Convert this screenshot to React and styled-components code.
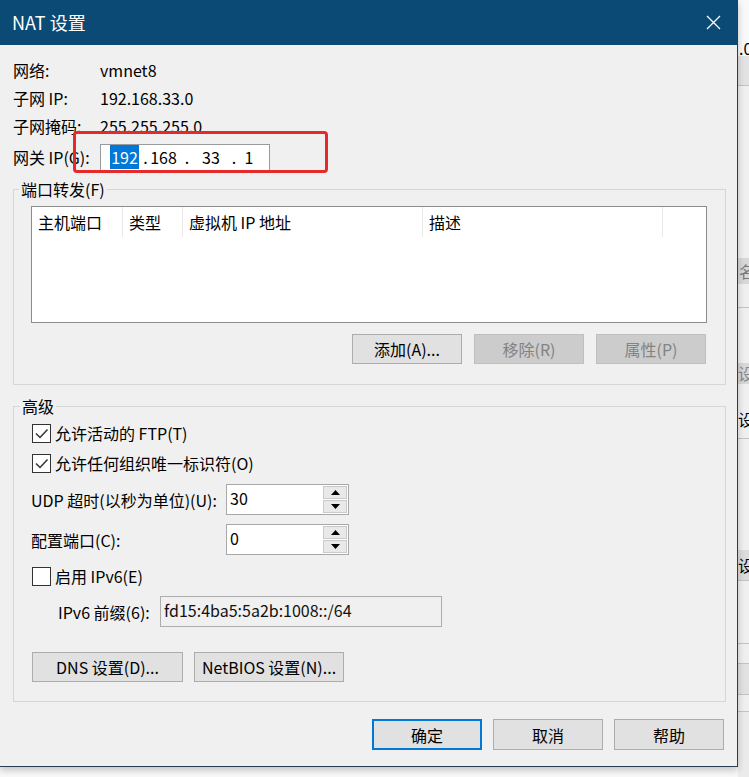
import React from 'react';
import styled, { createGlobalStyle } from 'styled-components'

const GlobalStyle = createGlobalStyle`
    html, body {
        margin: 0;
        padding: 0;
        background: #f8f8f8;
    }
    body {
        font-family: "Noto Sans CJK SC", "Noto Sans", sans-serif;
        font-size: 16px;
        color: #000;
    }
`

const Screen = styled.div`
    width: 749px;
    height: 777px;
    overflow: hidden;
    display: flex;
    align-items: flex-start;
`

/* Dialog window */
const Dialog = styled.div`
    flex: none;
    width: 738px;
    height: 767px;
    box-sizing: border-box;
    background: #f0f0f0;
    border-right: 1px solid #2b3d52;
    border-bottom: 1px solid #2b3d52;
    box-shadow: 0 3px 7px rgba(0, 0, 0, 0.22);
    display: flex;
    flex-direction: column;
    position: relative;
    z-index: 1;
`

const TitleBar = styled.div`
    height: 45px;
    flex: none;
    background: #0b4a74;
    display: flex;
    align-items: center;
    justify-content: space-between;
    padding: 0 16px 0 12px;

    .title {
        color: #fff;
        font-size: 18px;
        line-height: 22px;
        margin-top: -1px;
    }
`

const Body = styled.div`
    flex: 1;
    padding: 11px 11px 0 13px;
    display: flex;
    flex-direction: column;
`

/* Top info block */
const InfoBlock = styled.div`
    position: relative;
`

const InfoRow = styled.div`
    display: grid;
    grid-template-columns: 87px 1fr;
    align-items: center;
    height: ${p => p.$h || 28}px;
    line-height: 20px;
`

const IpBox = styled.div`
    width: 170px;
    height: 27px;
    box-sizing: border-box;
    border: 1px solid #9a9a9a;
    background: #fff;
    display: flex;
    align-items: center;
    padding-left: 5px;
    line-height: 20px;
`

const IpPart = styled.span`
    width: ${p => p.$w}px;
    flex: none;
    text-align: center;

    .sel {
        background: #0078d7;
        color: #fff;
        padding: 0 1px;
    }
`

const RedMark = styled.div`
    position: absolute;
    left: 60px;
    top: 75px;
    width: 255px;
    height: 42px;
    box-sizing: border-box;
    border: 3px solid #e62a2a;
    border-radius: 4px;
    pointer-events: none;
`

/* Group frames */
const Group = styled.fieldset`
    margin: ${p => p.$top}px 0 0 0;
    padding: 0;
    min-width: 0;
    border: 1px solid #d6d6d6;

    legend {
        margin-left: ${p => p.$legend}px;
        padding: 0 2px;
        font-size: 16px;
        line-height: 18px;
    }

    .inner {
        padding: ${p => p.$pad};
    }
`

/* List view */
const ListBox = styled.div`
    height: 117px;
    box-sizing: border-box;
    border: 1px solid #8c8c8c;
    background: #fff;
`

const ListHeader = styled.div`
    display: flex;
    height: 30px;
`

const HeaderCell = styled.div`
    width: ${p => (p.$w ? `${p.$w}px` : 'auto')};
    flex: ${p => (p.$w ? 'none' : '1')};
    box-sizing: border-box;
    padding-left: 6px;
    line-height: 30px;
    border-right: ${p => (p.$w ? '1px solid #e8e8e8' : 'none')};
    white-space: nowrap;
`

const ButtonRow = styled.div`
    display: flex;
    justify-content: ${p => p.$align || 'flex-end'};
    gap: ${p => p.$gap || 12}px;
    margin-top: ${p => p.$top}px;
    padding-left: ${p => p.$left || 0}px;
    padding-right: ${p => p.$right || 0}px;
`

const Button = styled.button`
    width: ${p => p.$w || 110}px;
    height: ${p => p.$h || 30}px;
    box-sizing: border-box;
    margin: 0;
    padding: 0;
    font-family: inherit;
    font-size: 16px;
    line-height: 20px;
    color: ${p => (p.disabled ? '#838383' : '#000')};
    background: ${p => (p.disabled ? '#cccccc' : '#e1e1e1')};
    border: ${p => (p.$primary ? '2px solid #0078d7' : p.disabled ? '1px solid #bfbfbf' : '1px solid #adadad')};
`

/* Advanced options */
const CheckRow = styled.div`
    display: flex;
    align-items: center;
    gap: 4px;
    height: 30px;
    margin-top: ${p => p.$top || 0}px;
    padding-left: 1px;
    line-height: 20px;
`

const Box = styled.span`
    width: 19px;
    height: 19px;
    box-sizing: border-box;
    border: 1px solid #333;
    background: #fff;
    display: flex;
    align-items: center;
    justify-content: center;
`

const FieldRow = styled.div`
    display: grid;
    grid-template-columns: ${p => p.$label}px ${p => p.$field}px;
    align-items: center;
    height: 31px;
    margin-top: ${p => p.$top}px;
    padding-left: ${p => p.$left || 0}px;
    line-height: 20px;
    white-space: nowrap;
`

const SpinBox = styled.div`
    height: 31px;
    box-sizing: border-box;
    border: 1px solid #a8a8a8;
    background: #fff;
    display: flex;

    .value {
        flex: 1;
        padding: 3px 0 0 3px;
    }
`

const SpinButtons = styled.div`
    width: 24px;
    display: flex;
    flex-direction: column;
    gap: 1px;
    padding: 1px 1px 1px 0;
`

const SpinButton = styled.div`
    flex: 1;
    box-sizing: border-box;
    background: #e9e9e9;
    border: 1px solid #cacaca;
    display: flex;
    align-items: center;
    justify-content: center;
`

const TextField = styled.div`
    height: 31px;
    box-sizing: border-box;
    border: 1px solid #adadad;
    background: #f0f0f0;
    padding: 3px 0 0 3px;
    color: #111;
`

/* Window partly hidden behind the dialog */
const BackStrip = styled.div`
    flex: 1;
    height: 777px;
    display: flex;
    flex-direction: column;
    overflow: hidden;
    background: #f0f0f0;
`

const Band = styled.div`
    height: ${p => p.$h}px;
    flex: none;
    background: ${p => p.$bg || '#f0f0f0'};
    border-bottom: ${p => (p.$line ? '1px solid #c4c4c4' : 'none')};
    color: ${p => p.$color || '#000'};
    font-size: 16px;
    line-height: ${p => p.$h}px;
    white-space: nowrap;
    padding-left: ${p => p.$indent || 0}px;
`

function Close() {
    return (
        <svg width="15" height="15" viewBox="0 0 15 15">
            <path d="M1 1 L14 14 M14 1 L1 14" stroke="#fff" strokeWidth="1.3" fill="none" />
        </svg>
    )
}

function Check({ checked }) {
    return (
        <Box>
            {checked && (
                <svg width="15" height="15" viewBox="0 0 15 15">
                    <path d="M2 7.5 L6 11.5 L13.5 3.5" stroke="#333" strokeWidth="1.5" fill="none" />
                </svg>
            )}
        </Box>
    )
}

function Spin({ value }) {
    return (
        <SpinBox>
            <span className="value">{value}</span>
            <SpinButtons>
                <SpinButton>
                    <svg width="9" height="5" viewBox="0 0 9 5"><polygon points="0,5 4.5,0 9,5" fill="#000" /></svg>
                </SpinButton>
                <SpinButton>
                    <svg width="9" height="5" viewBox="0 0 9 5"><polygon points="0,0 9,0 4.5,5" fill="#000" /></svg>
                </SpinButton>
            </SpinButtons>
        </SpinBox>
    )
}

const columns = [
    { label: '主机端口', w: 91 },
    { label: '类型', w: 60 },
    { label: '虚拟机 IP 地址', w: 240 },
    { label: '描述', w: 240 },
    { label: '' },
]

function App() {
    return (
        <Screen>
            <GlobalStyle />
            <Dialog>
                <TitleBar>
                    <span className="title">NAT 设置</span>
                    <Close />
                </TitleBar>
                <Body>
                    <InfoBlock>
                        <InfoRow><span>网络:</span><span>vmnet8</span></InfoRow>
                        <InfoRow><span>子网 IP:</span><span>192.168.33.0</span></InfoRow>
                        <InfoRow><span>子网掩码:</span><span>255.255.255.0</span></InfoRow>
                        <InfoRow $h={34}>
                            <span>网关 IP(G):</span>
                            <IpBox>
                                <IpPart $w={37}><span className="sel">192</span></IpPart>
                                <IpPart $w={5}>.</IpPart>
                                <IpPart $w={31}>168</IpPart>
                                <IpPart $w={16}>.</IpPart>
                                <IpPart $w={32}>33</IpPart>
                                <IpPart $w={14}>.</IpPart>
                                <IpPart $w={16}>1</IpPart>
                            </IpBox>
                        </InfoRow>
                        <RedMark />
                    </InfoBlock>

                    <Group $top={6} $legend={5} $pad="8px 18px 20px 17px">
                        <legend>端口转发(F)</legend>
                        <div className="inner">
                            <ListBox>
                                <ListHeader>
                                    {columns.map((c, i) => (
                                        <HeaderCell key={i} $w={c.w}>{c.label}</HeaderCell>
                                    ))}
                                </ListHeader>
                            </ListBox>
                            <ButtonRow $top={11} $right={1}>
                                <Button>添加(A)...</Button>
                                <Button disabled>移除(R)</Button>
                                <Button disabled>属性(P)</Button>
                            </ButtonRow>
                        </div>
                    </Group>

                    <Group $top={12} $legend={6} $pad="3px 18px 19px 17px">
                        <legend>高级</legend>
                        <div className="inner">
                            <CheckRow><Check checked /><span>允许活动的 FTP(T)</span></CheckRow>
                            <CheckRow><Check checked /><span>允许任何组织唯一标识符(O)</span></CheckRow>
                            <FieldRow $top={6} $label={195} $field={123}>
                                <span>UDP 超时(以秒为单位)(U):</span>
                                <Spin value="30" />
                            </FieldRow>
                            <FieldRow $top={9} $label={195} $field={123}>
                                <span>配置端口(C):</span>
                                <Spin value="0" />
                            </FieldRow>
                            <CheckRow $top={6}><Check /><span>启用 IPv6(E)</span></CheckRow>
                            <FieldRow $top={5} $left={27} $label={102} $field={282}>
                                <span>IPv6 前缀(6):</span>
                                <TextField>fd15:4ba5:5a2b:1008::/64</TextField>
                            </FieldRow>
                            <ButtonRow $top={25} $align="flex-start" $gap={11} $left={1}>
                                <Button $w={151}>DNS 设置(D)...</Button>
                                <Button $w={150}>NetBIOS 设置(N)...</Button>
                            </ButtonRow>
                        </div>
                    </Group>

                    <ButtonRow $top={17} $gap={11} $right={2}>
                        <Button $h={31} $primary>确定</Button>
                        <Button $h={31}>取消</Button>
                        <Button $h={31}>帮助</Button>
                    </ButtonRow>
                </Body>
            </Dialog>
            <BackStrip>
                <Band $h={40} $bg="#f9f9f9" />
                <Band $h={16} $bg="#f9f9f9" $indent={1}>.0</Band>
                <Band $h={29} $bg="#e3e3e3" $indent={0} $line>&nbsp;</Band>
                <Band $h={172} />
                <Band $h={26} $bg="#d8d8d8" $color="#777" $indent={1}>名</Band>
                <Band $h={23} $line />
                <Band $h={55} />
                <Band $h={21} $bg="#d8d8d8" $color="#888" $indent={0}>设</Band>
                <Band $h={16} />
                <Band $h={38} $indent={0} $line>设</Band>
                <Band $h={111} />
                <Band $h={30} $bg="#dcdcdc" $indent={0} $line>设</Band>
                <Band $h={62} $line />
                <Band $h={19} $line />
                <Band $h={30} $bg="#e2e2e2" $line />
                <Band $h={16} $line />
                <Band $h={70} $bg="#ebebeb" />
            </BackStrip>
        </Screen>
    )
}

export default App
